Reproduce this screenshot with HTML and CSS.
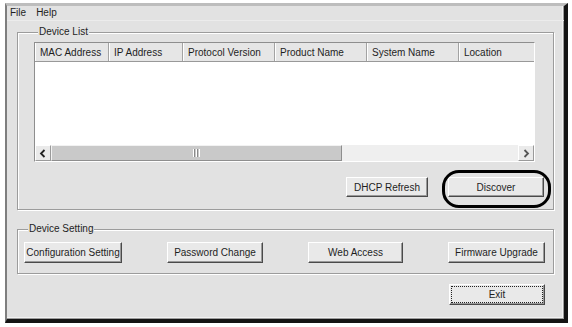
FILE: index.html
```html
<!DOCTYPE html>
<html lang="en">
<head>
    <meta charset="UTF-8">
    <meta name="viewport" content="width=device-width, initial-scale=1.0">
    <title>Device Discovery</title>
    <link rel="stylesheet" href="styles.css">
</head>
<body>
    <div class="window">
        <div class="menubar">
            <span class="menu-item">File</span>
            <span class="menu-item">Help</span>
        </div>

        <fieldset class="group group-list">
            <legend>Device List</legend>
            <div class="listview">
                <div class="list-header">
                    <div class="col col-mac">MAC Address</div>
                    <div class="col col-ip">IP Address</div>
                    <div class="col col-wide">Protocol Version</div>
                    <div class="col col-wide">Product Name</div>
                    <div class="col col-wide">System Name</div>
                    <div class="col col-last">Location</div>
                </div>
                <div class="list-body"></div>
                <div class="hscroll">
                    <div class="scroll-btn">
                        <svg width="8" height="9" viewBox="0 0 8 9"><polyline points="5.5,1 2,4.5 5.5,8" fill="none" stroke="#222" stroke-width="1.8"/></svg>
                    </div>
                    <div class="scroll-thumb">
                        <svg width="7" height="8" viewBox="0 0 7 8">
                            <line x1="0.5" y1="0" x2="0.5" y2="8" stroke="#fff"/>
                            <line x1="1.5" y1="0" x2="1.5" y2="8" stroke="#8a8a8a"/>
                            <line x1="3.5" y1="0" x2="3.5" y2="8" stroke="#fff"/>
                            <line x1="4.5" y1="0" x2="4.5" y2="8" stroke="#8a8a8a"/>
                            <line x1="6.5" y1="0" x2="6.5" y2="8" stroke="#fff"/>
                        </svg>
                    </div>
                    <div class="scroll-track"></div>
                    <div class="scroll-btn">
                        <svg width="8" height="9" viewBox="0 0 8 9"><polyline points="2.5,1 6,4.5 2.5,8" fill="none" stroke="#555" stroke-width="1.8"/></svg>
                    </div>
                </div>
            </div>
            <div class="list-actions">
                <button class="btn btn-dhcp">DHCP Refresh</button>
                <span class="callout">
                    <button class="btn btn-discover">Discover</button>
                </span>
            </div>
        </fieldset>

        <fieldset class="group group-setting">
            <legend>Device Setting</legend>
            <div class="setting-row">
                <button class="btn btn-config">Configuration Setting</button>
                <button class="btn btn-password">Password Change</button>
                <button class="btn btn-web">Web Access</button>
                <button class="btn btn-firmware">Firmware Upgrade</button>
            </div>
        </fieldset>

        <div class="footer">
            <button class="btn btn-exit">Exit</button>
        </div>
    </div>
</body>
</html>
```

FILE: styles.css
```css
* {
    margin: 0;
    padding: 0;
    box-sizing: border-box;
}

body {
    background-color: #ffffff;
    font-family: "Liberation Sans", Arial, sans-serif;
    font-size: 10px;
    color: #1e1e1e;
}

.window {
    margin: 3px 0 0 5px;
    width: 563px;
    height: 320px;
    background-color: #e2e2e2;
    border-top: 3px solid #bdbdbd;
    border-left: 2px solid #7e7e7e;
    border-right: 4px solid #141414;
    border-bottom: 4px solid #141414;
    box-shadow: inset -1px -1px 0 #9c9c9c, inset -2px -2px 0 #f2f2f2;
    display: flex;
    flex-direction: column;
}

.menubar {
    display: flex;
    gap: 4px;
    height: 15px;
    line-height: 14px;
    border-bottom: 1px solid #ececec;
}

.menu-item {
    padding: 0 3px;
}

/* group boxes */
.group {
    margin: 0 10px;
    padding: 0;
    min-width: 0;
    border: 1px solid #9c9c9c;
    box-shadow: 1px 1px 0 #ffffff, inset 1px 1px 0 #ffffff;
}

.group legend {
    margin-left: 4px;
    padding: 0 1px;
    line-height: 12px;
    background-color: #e2e2e2;
}

.group-list {
    margin-top: 5px;
    padding: 4px 0 12px 16px;
}

.group-setting {
    margin-top: 13px;
    padding: 7px 8px 10px 6px;
}

/* list view */
.listview {
    width: 501px;
    height: 120px;
    background-color: #ffffff;
    border: 1px solid;
    border-color: #8e8e8e #ffffff #ffffff #8e8e8e;
    display: flex;
    flex-direction: column;
}

.list-header {
    display: flex;
    height: 19px;
    background-color: #e6e6e6;
    border-bottom: 1px solid #999999;
}

.col {
    height: 18px;
    padding: 2px 0 0 5px;
    line-height: 16px;
    white-space: nowrap;
    overflow: hidden;
    border-right: 1px solid #a3a3a3;
    box-shadow: inset 1px 0 0 #ffffff;
}

.col-mac,
.col-ip {
    width: 74px;
}

.col-wide {
    width: 92px;
}

.col-last {
    flex: 1;
    border-right: none;
}

.list-body {
    height: 83px;
}

.hscroll {
    display: flex;
    height: 16px;
    background-color: #efefef;
}

.scroll-btn {
    width: 16px;
    display: flex;
    justify-content: center;
    align-items: center;
    background-color: #eaeaea;
    border: 1px solid;
    border-color: #ffffff #9a9a9a #9a9a9a #ffffff;
}

.scroll-thumb {
    width: 291px;
    display: flex;
    justify-content: center;
    align-items: center;
    background-color: #c9c9c9;
    border: 1px solid;
    border-color: #f2f2f2 #8e8e8e #8e8e8e #f2f2f2;
}

.scroll-track {
    flex: 1;
}

/* buttons */
.btn {
    height: 21px;
    font-family: "Liberation Sans", Arial, sans-serif;
    font-size: 10px;
    color: #1e1e1e;
    background-color: #e9e9e9;
    border: 1px solid;
    border-color: #ffffff #4a4a4a #4a4a4a #ffffff;
    box-shadow: inset -1px -1px 0 #9a9a9a;
    white-space: nowrap;
}

.list-actions {
    display: flex;
    justify-content: flex-end;
    gap: 20px;
    margin-top: 15px;
    padding-right: 9px;
}

.list-actions .btn {
    height: 20px;
}

.btn-dhcp {
    width: 82px;
}

.btn-discover {
    width: 96px;
}

/* hand-drawn mark around Discover */
.callout {
    position: relative;
    display: flex;
}

.callout::after {
    content: "";
    position: absolute;
    top: -7px;
    bottom: -11px;
    left: -6px;
    right: -7px;
    border: 3px solid #000000;
    border-radius: 17px;
    pointer-events: none;
}

.setting-row {
    display: flex;
    justify-content: space-between;
}

.btn-config {
    width: 98px;
}

.btn-password {
    width: 96px;
}

.btn-web {
    width: 95px;
}

.btn-firmware {
    width: 97px;
}

.footer {
    display: flex;
    justify-content: flex-end;
    margin-top: 10px;
    padding-right: 19px;
}

.btn-exit {
    width: 96px;
    outline: 1px dotted #222222;
    outline-offset: -3px;
}
```
